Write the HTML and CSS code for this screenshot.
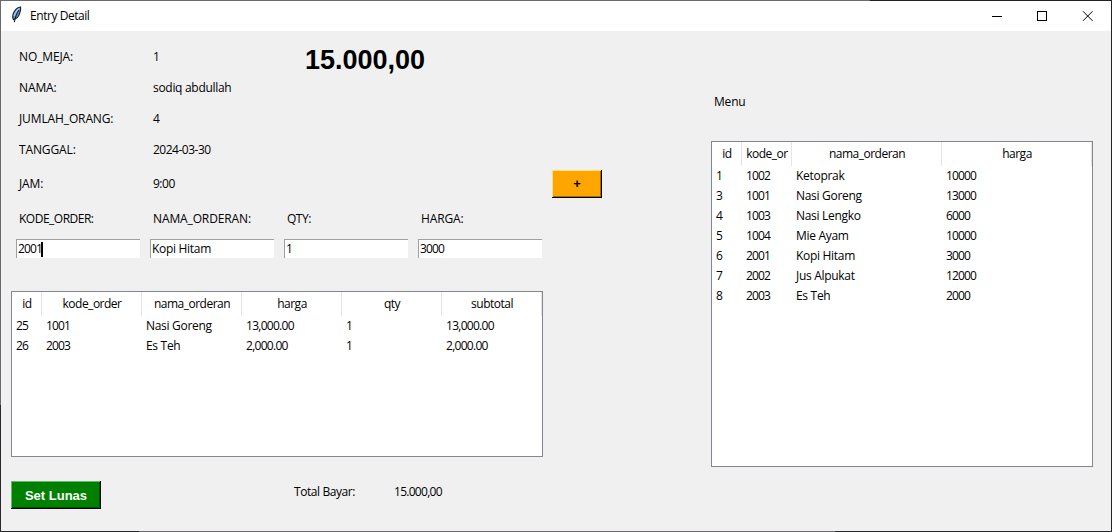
FILE: index.html
```html
<!DOCTYPE html>
<html lang="id">
<head>
<meta charset="utf-8">
<title>Entry Detail</title>
<link rel="stylesheet" href="styles.css">
</head>
<body>
<div class="window">
  <header class="titlebar">
    <svg class="feather" width="12" height="18" viewBox="0 0 12 18">
      <path d="M10.6 1C7.2 1.6 4.4 4.4 3.1 8C2.4 10.2 2.5 12.2 3.4 13.6C6.2 13 8.6 10.6 9.6 7.6C10.4 5.2 11 3 10.6 1Z" fill="#5f93c8" stroke="#15202b" stroke-width="1.1"/>
      <path d="M9.4 2.4C7 4 4.9 7 4.1 10.2" fill="none" stroke="#a9cdf0" stroke-width="1.2"/>
      <path d="M9 4C6.8 7.5 5.2 11 4.3 16.3" fill="none" stroke="#111" stroke-width="1"/>
    </svg>
    <span class="title">Entry Detail</span>
    <svg class="controls" width="104" height="12" viewBox="0 0 104 12" fill="none" stroke="#000">
      <path d="M0 5.5H10"/>
      <rect x="45.5" y="0.5" width="9" height="9" />
      <path d="M91 0.3L100.5 9.8M100.5 0.3L91 9.8"/>
    </svg>
  </header>
  <main class="content">
    <section class="order">
      <div class="form">
        <div class="details">
          <span class="caps">NO_MEJA:</span><span class="num">1</span>
          <span class="caps">NAMA:</span><span class="name">sodiq abdullah</span>
          <span class="caps">JUMLAH_ORANG:</span><span class="num">4</span>
          <span class="caps">TANGGAL:</span><span class="num date">2024-03-30</span>
          <span class="caps">JAM:</span><span class="num date">9:00</span>
        </div>
        <div class="grand">15.000,00</div>
      </div>
      <div class="fields">
        <label class="field"><span class="caps tight">KODE_ORDER:</span><span class="entry num">2001<i class="caret"></i></span></label>
        <label class="field"><span class="caps">NAMA_ORDERAN:</span><span class="entry">Kopi Hitam</span></label>
        <label class="field"><span class="caps tight">QTY:</span><span class="entry num">1</span></label>
        <label class="field"><span class="caps">HARGA:</span><span class="entry num">3000</span></label>
      </div>
      <div class="tree tree-order">
        <table>
          <colgroup><col class="w30"><col class="w100"><col class="w100"><col class="w100"><col class="w100"><col class="w100"></colgroup>
          <thead><tr><th>id</th><th>kode_order</th><th>nama_orderan</th><th>harga</th><th>qty</th><th>subtotal</th></tr></thead>
          <tbody>
            <tr><td class="num">25</td><td class="num">1001</td><td>Nasi Goreng</td><td class="num money">13,000.00</td><td class="num">1</td><td class="num money">13,000.00</td></tr>
            <tr><td class="num">26</td><td class="num">2003</td><td>Es Teh</td><td class="num money">2,000.00</td><td class="num">1</td><td class="num money">2,000.00</td></tr>
          </tbody>
        </table>
      </div>
      <div class="footer">
        <button class="btn btn-paid">Set Lunas</button>
        <span class="total-label">Total Bayar:</span>
        <span class="num money">15.000,00</span>
      </div>
    </section>
    <button class="btn btn-add">+</button>
    <section class="menu">
      <div class="menu-title">Menu</div>
      <div class="tree tree-menu">
        <table>
          <colgroup><col class="w30"><col class="w50"><col class="w150"><col class="w150"></colgroup>
          <thead><tr><th>id</th><th>kode_or</th><th>nama_orderan</th><th>harga</th></tr></thead>
          <tbody>
            <tr><td class="num">1</td><td class="num">1002</td><td>Ketoprak</td><td class="num">10000</td></tr>
            <tr><td class="num">3</td><td class="num">1001</td><td>Nasi Goreng</td><td class="num">13000</td></tr>
            <tr><td class="num">4</td><td class="num">1003</td><td>Nasi Lengko</td><td class="num">6000</td></tr>
            <tr><td class="num">5</td><td class="num">1004</td><td>Mie Ayam</td><td class="num">10000</td></tr>
            <tr><td class="num">6</td><td class="num">2001</td><td>Kopi Hitam</td><td class="num">3000</td></tr>
            <tr><td class="num">7</td><td class="num">2002</td><td>Jus Alpukat</td><td class="num">12000</td></tr>
            <tr><td class="num">8</td><td class="num">2003</td><td>Es Teh</td><td class="num">2000</td></tr>
          </tbody>
        </table>
      </div>
    </section>
  </main>
</div>
</body>
</html>
```
FILE: styles.css
```css
* { box-sizing: border-box; }
body {
  margin: 0;
  width: 1112px;
  height: 532px;
  overflow: hidden;
  font: 12px/16px "Open Sans", "Noto Sans", sans-serif;
  letter-spacing: -0.3px;
  color: #000;
}
.window {
  width: 1112px;
  height: 532px;
  padding: 1px;
  background:
    linear-gradient(90deg, #6b696b 870px, #222224 870px) 0 0 / 100% 1px no-repeat,
    linear-gradient(90deg, #29282b 139px, #6b696b 139px 835px, #29282b 835px) 0 100% / 100% 1px no-repeat,
    linear-gradient(#6b696b 405px, #29282b 405px) 0 0 / 1px 100% no-repeat,
    #222224;
}
.titlebar {
  display: flex;
  align-items: center;
  height: 30px;
  padding: 0 15px 0 9px;
  background: #fff;
}
.feather { margin: -2px 8px 0 0; }
.title { flex: 1; letter-spacing: -0.45px; }
.controls { margin: 1px 0 0; }
.content {
  display: flex;
  align-items: flex-start;
  height: 500px;
  padding-left: 10px;
  background: #f0f0f0;
}
.order { width: 532px; }
.caps { letter-spacing: -0.12px; }
.caps.tight { letter-spacing: -0.5px; }
.num { letter-spacing: -0.86px; }
.num.date { letter-spacing: -0.5px; }
.num.money { letter-spacing: -0.72px; }
.form { display: flex; height: 170px; padding: 10px 0 0 8px; }
.details {
  display: grid;
  grid-template-columns: 134px 152px;
  grid-template-rows: 31px 31px 31px 31px 37px;
  align-items: center;
}
.grand {
  padding-top: 4px;
  font: bold 27px/31px "Liberation Sans", Arial, sans-serif;
  letter-spacing: 0;
}
.fields { display: flex; gap: 10px; padding: 10px 0 0 5px; }
.field { width: 124px; }
.field .caps { display: block; height: 28px; padding-left: 3px; }
.entry {
  display: flex;
  align-items: center;
  height: 19px;
  padding-left: 1px;
  border-top: 1px solid #a0a0a0;
  border-left: 1px solid #a0a0a0;
  background: #fff;
}
.caret { width: 2px; height: 15px; margin-left: -1px; background: #000; }
.tree { border: 1px solid #828790; background: #fff; }
.tree-order { height: 166px; margin-top: 33px; }
.tree-menu { height: 326px; }
table { table-layout: fixed; border-collapse: separate; border-spacing: 0; width: 530px; }
.tree-menu table { width: 380px; }
.w30 { width: 30px; }
.w50 { width: 50px; }
.w100 { width: 100px; }
.w150 { width: 150px; }
th {
  height: 24px;
  padding: 0 0 0 1px;
  border-right: 1px solid #e5e5e5;
  font-weight: normal;
  text-align: center;
  letter-spacing: -0.5px;
}
td { height: 20px; padding: 0 0 0 4px; white-space: nowrap; }
.btn {
  border: 0;
  padding: 0;
  height: 28px;
  font: bold 13px/28px "Liberation Sans", Arial, sans-serif;
  text-align: center;
}
.btn-add {
  width: 50px;
  margin: 139px 0 0 9px;
  background: #ffa500;
  box-shadow: inset -1px -1px #000, inset 1px 1px #ffe080, inset -2px -2px #a86d00;
}
.btn-paid {
  width: 90px;
  padding-top: 1px;
  background: #008000;
  color: #fff;
  box-shadow: inset -1px -1px #000, inset 1px 1px #66b866, inset -2px -2px #005500;
}
.footer { display: flex; padding-top: 24px; }
.footer span { padding-top: 3px; }
.total-label { width: 100px; margin-left: 193px; letter-spacing: -0.42px; }
.menu { width: 382px; margin-left: 109px; padding-top: 63px; }
.menu-title { height: 47px; padding-left: 3px; letter-spacing: -0.2px; }
```
